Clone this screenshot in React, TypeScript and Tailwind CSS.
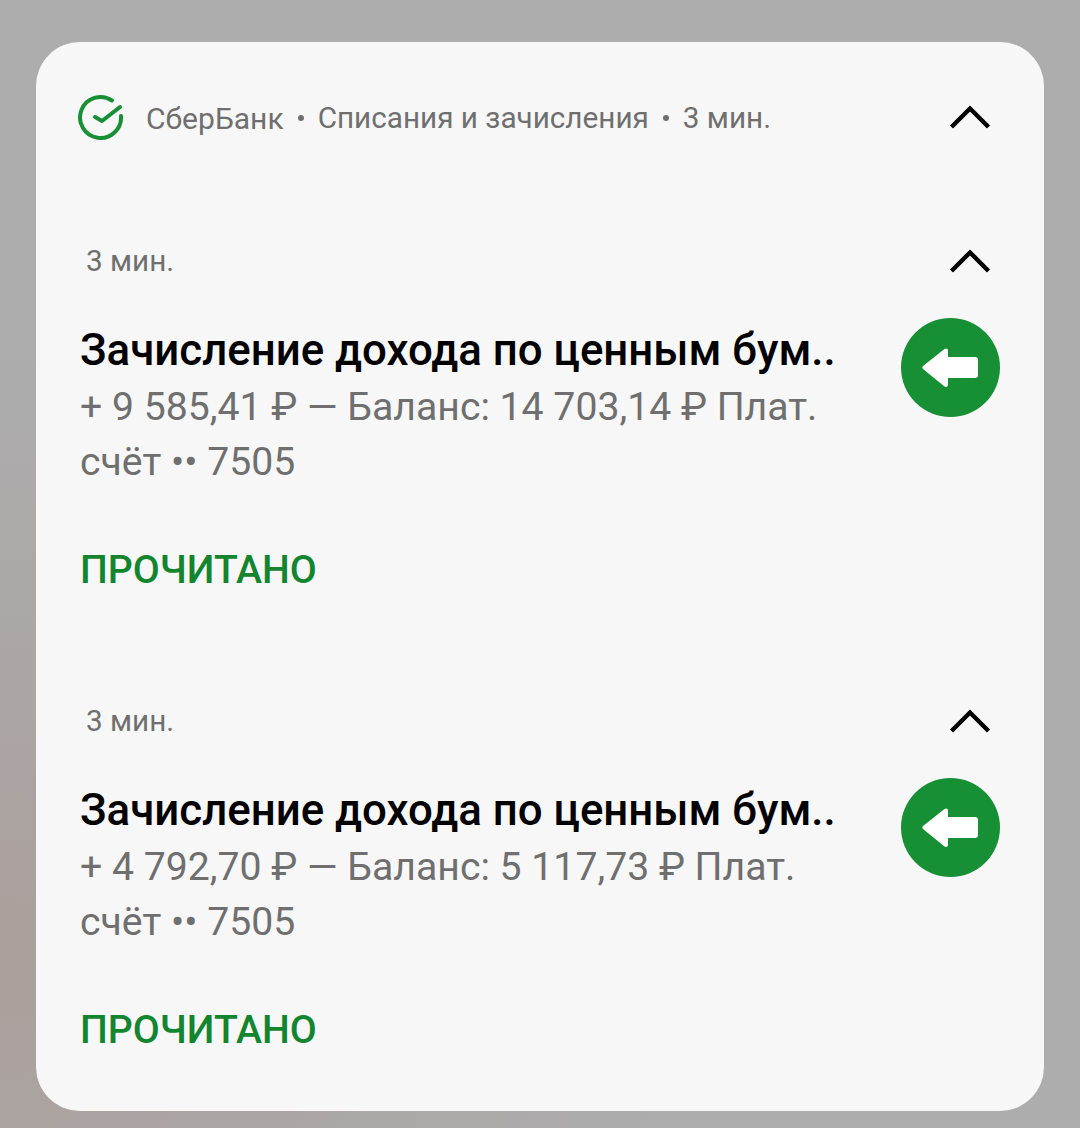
const font = "font-['Roboto',sans-serif]"

function Chevron() {
	return (
		<svg width="44" height="28" viewBox="0 0 44 28" fill="none" className="shrink-0">
			<path d="M3.5 23 L22 4.5 L40.5 23" stroke="#000" strokeWidth="4.4" />
		</svg>
	)
}

function Arrow() {
	return (
		<svg width="99" height="99" viewBox="0 0 99 99" className="shrink-0">
			<circle cx="49.5" cy="49.5" r="49.5" fill="#178F35" />
			<path
				d="M43.5 31 L22 48 Q20.5 49.5 22 51 L43.5 68.5 Q47 70 47 66.5 V60 H74 Q77 60 77 57 V42 Q77 39 74 39 H47 V33 Q47 29.5 43.5 31 Z"
				fill="#fff"
			/>
		</svg>
	)
}

function Dot() {
	return <span className="w-[6px] h-[6px] rounded-full bg-[#6f6f6f] mx-[14px] shrink-0" />
}

function Notification({ body }: { body: string }) {
	return (
		<div className="flex flex-col">
			<div className="flex items-center justify-between h-[40px] pl-[50px] pr-[52px]">
				<span className="text-[29.7px] text-[#6f6f6f] pb-[2px]">3 мин.</span>
				<Chevron />
			</div>
			<div className="flex justify-between pl-[44px] pr-[44px] mt-[37px]">
				<div className="w-[770px]">
					<div className="text-[43.8px] pt-[2px] leading-[58px] font-medium text-black whitespace-nowrap">
						Зачисление дохода по ценным бум..
					</div>
					<div className="mt-px text-[39.2px] leading-[55px] text-[#6f6f6f]">{body}</div>
				</div>
				<div className="-mt-px">
					<Arrow />
				</div>
			</div>
			<div className="pl-[44px] mt-[55px] text-[39.2px] leading-[50px] font-medium text-[#14852F]">
				ПРОЧИТАНО
			</div>
		</div>
	)
}

export default function App() {
	return (
		<div
			className={`${font} w-[1080px] h-[1128px] overflow-hidden pt-[42px] px-[36px] bg-[radial-gradient(ellipse_at_0%_85%,#aaa09c_0%,#adadae_45%)]`}
		>
			<div className="w-[1008px] h-[1069px] rounded-[44px] bg-[#f7f7f7] flex flex-col">
				{/* App header */}
				<div className="flex items-center justify-between h-[48px] mt-[52px] pl-[41px] pr-[52px]">
					<div className="flex items-center">
						<svg width="48" height="48" viewBox="0 0 48 48" fill="none">
							<path
								d="M35 6.5 A20.5 20.5 0 1 0 44 22"
								stroke="#178F35"
								strokeWidth="4"
								strokeLinecap="round"
							/>
							<path
								d="M18 23 L25 27 L43 13"
								stroke="#178F35"
								strokeWidth="4"
								strokeLinecap="round"
								strokeLinejoin="round"
							/>
						</svg>
						<div className="ml-[21px] flex items-center text-[29.7px] text-[#6f6f6f] whitespace-nowrap">
							<span className="text-[30px]">СберБанк</span>
							<Dot />
							<span>Списания и зачисления</span>
							<Dot />
							<span>3 мин.</span>
						</div>
					</div>
					<Chevron />
				</div>

				<div className="flex flex-col gap-[107px] mt-[100px]">
					<Notification body="+ 9 585,41 ₽ — Баланс: 14 703,14 ₽ Плат. счёт •• 7505" />
					<Notification body="+ 4 792,70 ₽ — Баланс: 5 117,73 ₽ Плат. счёт •• 7505" />
				</div>
			</div>
		</div>
	)
}
